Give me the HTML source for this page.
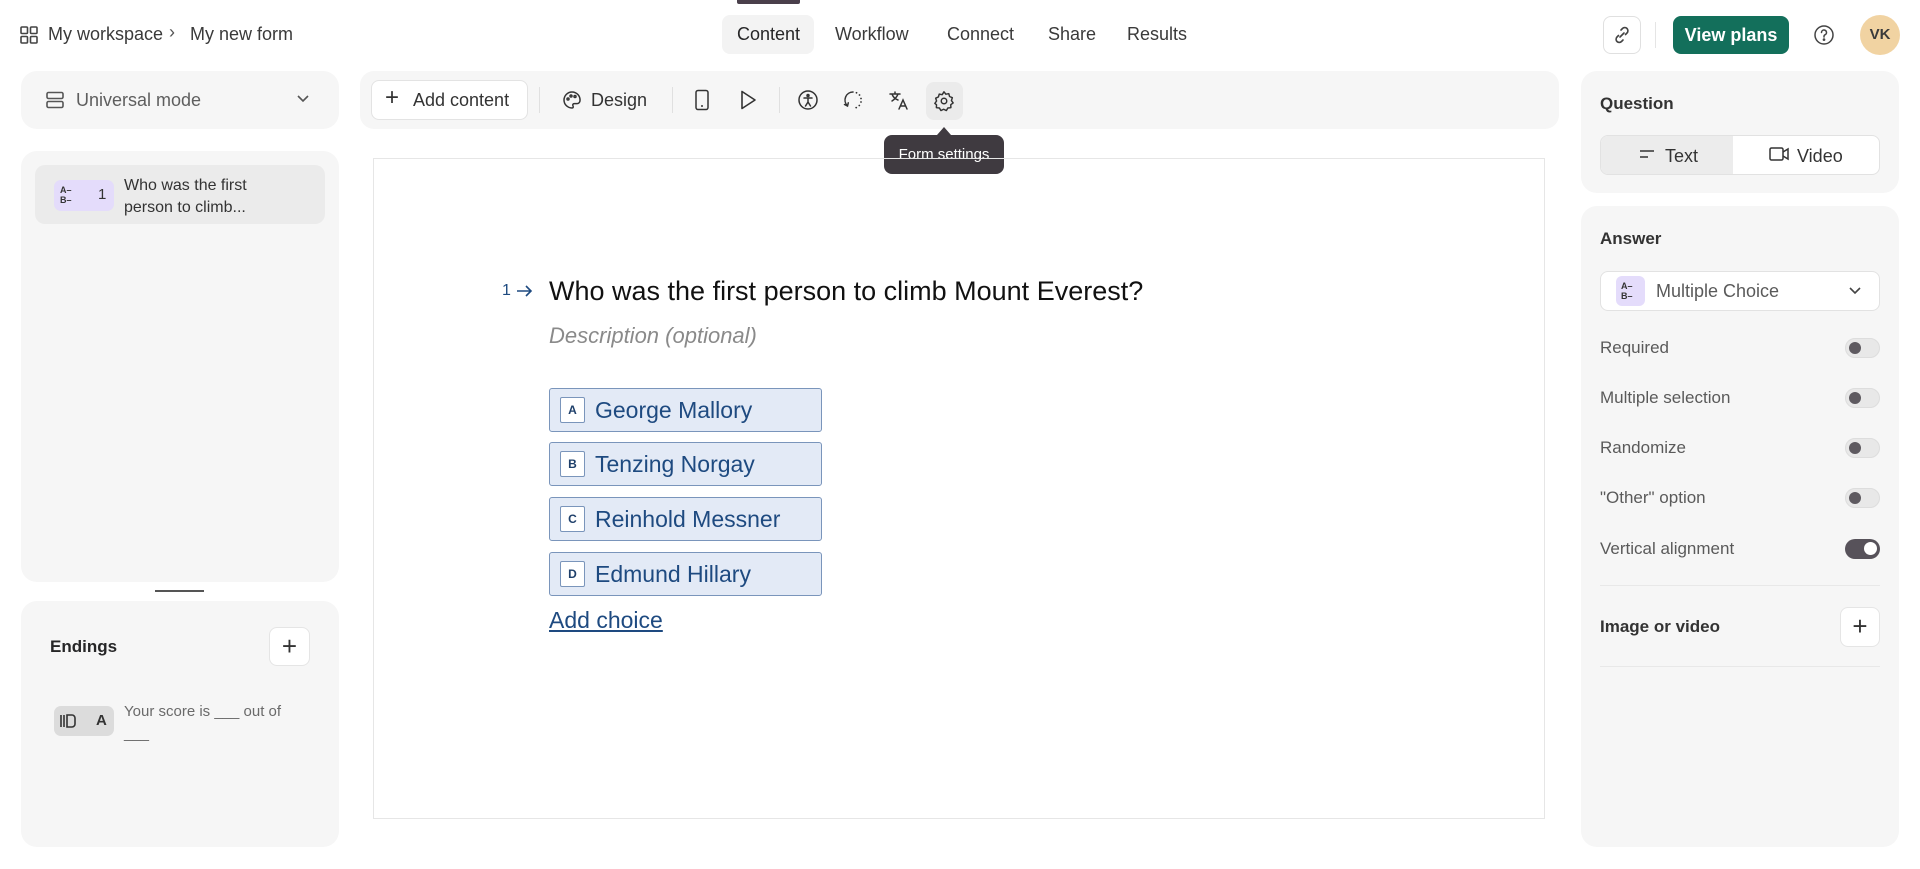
<!DOCTYPE html>
<html><head><meta charset="utf-8"><style>
*{box-sizing:border-box;margin:0;padding:0}
body{width:1920px;height:869px;background:#fff;font-family:"Liberation Sans",sans-serif;color:#262627;position:relative;overflow:hidden}
.a{position:absolute}
.panel{position:absolute;background:#f6f6f6;border-radius:16px}
.t{position:absolute;white-space:nowrap}
.tab{font-size:18px;color:#3a3a3a;top:24px}
.row{position:absolute;left:1600px;font-size:17px;color:#5a5a5a}
.tg{position:absolute;left:1845px;width:35px;height:20px;border-radius:10px;background:#e8e8e8;border:1px solid #ddd}
.tg:after{content:"";position:absolute;left:3px;top:3px;width:12px;height:12px;border-radius:50%;background:#5e5a60}
.ch{position:absolute;left:549px;width:273px;height:44px;background:#e3eaf6;border:1px solid #7a95bb;border-radius:3px}
.ch .k{position:absolute;left:10px;top:8px;width:25px;height:26px;background:#fff;border:1px solid #7a95bb;border-radius:2px;font-size:12px;font-weight:bold;color:#1e3f6a;text-align:center;line-height:24px}
.ch .v{position:absolute;left:45px;top:8px;font-size:23px;color:#1e4a80}
svg{position:absolute}
</style></head><body>
<!-- top bar -->
<svg style="left:20px;top:26px" width="18" height="18" viewBox="0 0 18 18" fill="none" stroke="#444" stroke-width="1.6"><rect x="1" y="1" width="6.5" height="6.5" rx="1"/><rect x="10.5" y="1" width="6.5" height="6.5" rx="1"/><rect x="1" y="10.5" width="6.5" height="6.5" rx="1"/><rect x="10.5" y="10.5" width="6.5" height="6.5" rx="1"/></svg>
<div class="t" style="left:48px;top:24px;font-size:18px;color:#3a3a3a">My workspace</div>
<div class="t" style="left:169px;top:22px;font-size:18px;color:#555">›</div>
<div class="t" style="left:190px;top:24px;font-size:18px;color:#3a3a3a">My new form</div>
<div class="a" style="left:737px;top:0;width:63px;height:4px;background:#4a3f4b;border-radius:0 0 2px 2px"></div>
<div class="a" style="left:722px;top:15px;width:92px;height:39px;background:#f3f3f3;border-radius:8px"></div>
<div class="t tab" style="left:737px;color:#262627">Content</div>
<div class="t tab" style="left:835px">Workflow</div>
<div class="t tab" style="left:947px">Connect</div>
<div class="t tab" style="left:1048px">Share</div>
<div class="t tab" style="left:1127px">Results</div>
<div class="a" style="left:1603px;top:16px;width:38px;height:38px;border:1px solid #e0e0e0;border-radius:8px"></div>
<svg style="left:1612px;top:25px" width="20" height="20" viewBox="0 0 20 20" fill="none" stroke="#444" stroke-width="1.6" stroke-linecap="round"><path d="M8 12l4-4M9 5l1.5-1.5a3 3 0 0 1 4.5 4.5L13.5 9.5M11 15l-1.5 1.5a3 3 0 0 1-4.5-4.5L6.5 10.5"/></svg>
<div class="a" style="left:1655px;top:22px;width:1px;height:26px;background:#e5e5e5"></div>
<div class="a" style="left:1673px;top:16px;width:116px;height:38px;background:#136f5b;border-radius:8px;color:#fff;font-size:18px;font-weight:bold;text-align:center;line-height:38px">View plans</div>
<svg style="left:1813px;top:24px" width="22" height="22" viewBox="0 0 22 22" fill="none" stroke="#444" stroke-width="1.5"><circle cx="11" cy="11" r="9"/><path d="M8.5 8.5a2.5 2.5 0 1 1 3.5 2.3c-.7.3-1 .8-1 1.5v.7" stroke-linecap="round"/><circle cx="11" cy="15.6" r=".6" fill="#444"/></svg>
<div class="a" style="left:1860px;top:15px;width:40px;height:40px;border-radius:50%;background:#f1d3a2;font-size:15px;font-weight:bold;color:#3a3a3a;text-align:center;line-height:40px">VK</div>

<!-- left -->
<div class="panel" style="left:21px;top:71px;width:318px;height:58px"></div>
<svg style="left:46px;top:91px" width="18" height="18" viewBox="0 0 18 18" fill="none" stroke="#555" stroke-width="1.6"><rect x="1" y="1.5" width="16" height="6" rx="1.5"/><rect x="1" y="10.5" width="16" height="6" rx="1.5"/></svg>
<div class="t" style="left:76px;top:90px;font-size:18px;color:#5e5e5e">Universal mode</div>
<svg style="left:296px;top:94px" width="14" height="10" viewBox="0 0 14 10" fill="none" stroke="#555" stroke-width="1.6"><path d="M2 2l5 5 5-5"/></svg>

<div class="panel" style="left:21px;top:151px;width:318px;height:431px"></div>
<div class="a" style="left:35px;top:165px;width:290px;height:59px;background:#ebebeb;border-radius:10px"></div>
<div class="a" style="left:54px;top:180px;width:60px;height:31px;background:#e4dcfb;border-radius:7px"></div>
<div class="t" style="left:60px;top:185px;font-size:9px;font-weight:bold;line-height:10px;color:#333">A–<br>B–</div>
<div class="t" style="left:98px;top:186px;font-size:15px;color:#333">1</div>
<div class="t" style="left:124px;top:175px;font-size:16px;line-height:22px;color:#333">Who was the first<br>person to climb...</div>
<div class="a" style="left:155px;top:590px;width:49px;height:2px;background:#555"></div>

<div class="panel" style="left:21px;top:601px;width:318px;height:246px"></div>
<div class="t" style="left:50px;top:637px;font-size:17px;font-weight:bold;color:#262627">Endings</div>
<div class="a" style="left:269px;top:627px;width:41px;height:39px;background:#fff;border:1px solid #e5e5e5;border-radius:8px;font-size:26px;line-height:36px;text-align:center;color:#333">+</div>
<div class="a" style="left:54px;top:706px;width:60px;height:30px;background:#dcdcdc;border-radius:7px"></div>
<svg style="left:59px;top:713px" width="20" height="16" viewBox="0 0 20 16" fill="none" stroke="#333" stroke-width="1.6"><path d="M2 2v12M5 2v12M8 2h5a3 3 0 0 1 3 3v6a3 3 0 0 1-3 3H8z"/></svg>
<div class="t" style="left:96px;top:712px;font-size:15px;font-weight:bold;color:#333">A</div>
<div class="t" style="left:124px;top:701px;font-size:15px;line-height:22px;color:#6a6a6a">Your score is ___ out of<br>___</div>

<!-- toolbar -->
<div class="panel" style="left:360px;top:71px;width:1199px;height:58px;border-radius:14px"></div>
<div class="a" style="left:371px;top:80px;width:157px;height:40px;background:#fff;border:1px solid #e3e3e3;border-radius:8px"></div>
<div class="t" style="left:385px;top:86px;font-size:24px;color:#333;line-height:24px">+</div>
<div class="t" style="left:413px;top:90px;font-size:18px;color:#333">Add content</div>
<div class="a" style="left:539px;top:87px;width:1px;height:26px;background:#e0e0e0"></div>
<svg style="left:562px;top:90px" width="20" height="20" viewBox="0 0 20 20" fill="none" stroke="#333" stroke-width="1.5"><path d="M10 2a8 8 0 0 0 0 16c1.2 0 1.6-1 1-2-.7-1.1 0-2.4 1.3-2.4H15a3 3 0 0 0 3-3A8 8 0 0 0 10 2z"/><circle cx="6" cy="9" r="1"/><circle cx="9" cy="6" r="1"/><circle cx="13" cy="6.5" r="1"/></svg>
<div class="t" style="left:591px;top:90px;font-size:18px;color:#333">Design</div>
<div class="a" style="left:672px;top:87px;width:1px;height:26px;background:#e0e0e0"></div>
<svg style="left:694px;top:89px" width="16" height="22" viewBox="0 0 16 22" fill="none" stroke="#333" stroke-width="1.5"><rect x="2" y="1.5" width="12" height="19" rx="2"/><path d="M7 17h2"/></svg>
<svg style="left:738px;top:89px" width="20" height="22" viewBox="0 0 20 22" fill="none" stroke="#333" stroke-width="1.6" stroke-linejoin="round"><path d="M4 2.5v17l13-8.5z"/></svg>
<div class="a" style="left:779px;top:87px;width:1px;height:26px;background:#e0e0e0"></div>
<svg style="left:797px;top:89px" width="22" height="22" viewBox="0 0 22 22" fill="none" stroke="#333" stroke-width="1.5" stroke-linecap="round"><circle cx="11" cy="11" r="9"/><circle cx="11" cy="6.5" r="1" fill="#333"/><path d="M7 9h8M11 9v4l-2.5 4M11 13l2.5 4"/></svg>
<svg style="left:842px;top:89px" width="22" height="22" viewBox="0 0 22 22" fill="none" stroke="#333" stroke-width="1.5" stroke-linecap="round"><path d="M11 3A8 8 0 0 0 5.3 16.6"/><path d="M2.5 15.5l3 1.5 .8-3.2"/><circle cx="14.5" cy="3.8" r=".9" fill="#333" stroke="none"/><circle cx="17.5" cy="6" r=".9" fill="#333" stroke="none"/><circle cx="19" cy="9.5" r=".9" fill="#333" stroke="none"/><circle cx="19" cy="13" r=".9" fill="#333" stroke="none"/><circle cx="17.3" cy="16.5" r=".9" fill="#333" stroke="none"/><circle cx="14.2" cy="18.6" r=".9" fill="#333" stroke="none"/></svg>
<svg style="left:888px;top:89px" width="22" height="22" viewBox="0 0 22 22" fill="none" stroke="#333" stroke-width="1.5" stroke-linecap="round"><path d="M2 5h10M7 3v2M4 5c1 3 3 5 6 6M10 5c-1 3-3 5-6 7M11 20l4-9 4 9M12.5 17h5"/></svg>
<div class="a" style="left:926px;top:82px;width:37px;height:38px;background:#ebebeb;border-radius:8px"></div>
<svg style="left:933px;top:90px" width="22" height="22" viewBox="0 0 24 24" fill="none" stroke="#333" stroke-width="1.6"><circle cx="12" cy="12" r="3"/><path d="M12 2l2 2.6 3.2-.6.9 3.1 3 1.3-1 3.1 1.9 2.6-2.6 1.9.1 3.3-3.3.3-1.6 2.8-3-1.4-3 1.4-1.6-2.8-3.3-.3.1-3.3L2 14.6l1.9-2.6-1-3.1 3-1.3.9-3.1 3.2.6z" stroke-linejoin="round"/></svg>
<div class="a" style="left:884px;top:135px;width:120px;height:39px;background:#3f3a40;border-radius:8px;color:#fff;font-size:15px;display:flex;align-items:center;justify-content:center">Form settings</div>
<div class="a" style="left:937px;top:127px;width:0;height:0;border-left:7px solid transparent;border-right:7px solid transparent;border-bottom:8px solid #3f3a40"></div>

<!-- canvas -->
<div class="a" style="left:373px;top:158px;width:1172px;height:661px;border:1px solid #e6e6e6"></div>
<div class="t" style="left:502px;top:282px;font-size:16px;color:#1e4a80">1</div>
<svg style="left:515px;top:282px" width="20" height="18" viewBox="0 0 20 18" fill="none" stroke="#1e4a80" stroke-width="1.6"><path d="M2 9h14M11 4l5 5-5 5"/></svg>
<div class="t" style="left:549px;top:276px;font-size:27px;color:#111">Who was the first person to climb Mount Everest?</div>
<div class="t" style="left:549px;top:323px;font-size:22px;font-style:italic;color:#8a8a8a">Description (optional)</div>
<div class="ch" style="top:388px"><div class="k">A</div><div class="v">George Mallory</div></div>
<div class="ch" style="top:442px"><div class="k">B</div><div class="v">Tenzing Norgay</div></div>
<div class="ch" style="top:497px"><div class="k">C</div><div class="v">Reinhold Messner</div></div>
<div class="ch" style="top:552px"><div class="k">D</div><div class="v">Edmund Hillary</div></div>
<div class="t" style="left:549px;top:607px;font-size:23px;color:#1e4a80;text-decoration:underline">Add choice</div>

<!-- right -->
<div class="panel" style="left:1581px;top:71px;width:318px;height:122px"></div>
<div class="t" style="left:1600px;top:94px;font-size:17px;font-weight:bold;color:#333">Question</div>
<div class="a" style="left:1600px;top:135px;width:280px;height:40px;background:#fff;border:1px solid #e2e2e2;border-radius:8px;overflow:hidden"><div class="a" style="left:0;top:0;width:132px;height:40px;background:#ececec"></div></div>
<svg style="left:1639px;top:149px" width="16" height="10" viewBox="0 0 16 10" stroke="#333" stroke-width="1.6"><path d="M1 2h14M1 8h8"/></svg>
<div class="t" style="left:1665px;top:146px;font-size:18px;color:#333">Text</div>
<svg style="left:1769px;top:146px" width="22" height="16" viewBox="0 0 22 16" fill="none" stroke="#333" stroke-width="1.5"><rect x="1" y="2" width="13" height="12" rx="1.5"/><path d="M14 6l5-3v10l-5-3"/></svg>
<div class="t" style="left:1797px;top:146px;font-size:18px;color:#333">Video</div>

<div class="panel" style="left:1581px;top:206px;width:318px;height:641px"></div>
<div class="t" style="left:1600px;top:229px;font-size:17px;font-weight:bold;color:#333">Answer</div>
<div class="a" style="left:1600px;top:271px;width:280px;height:40px;background:#fff;border:1px solid #e2e2e2;border-radius:8px"></div>
<div class="a" style="left:1616px;top:276px;width:29px;height:30px;background:#e4dcfb;border-radius:6px"></div>
<div class="t" style="left:1621px;top:281px;font-size:9px;font-weight:bold;line-height:10px;color:#333">A–<br>B–</div>
<div class="t" style="left:1656px;top:281px;font-size:18px;color:#5a5a5a">Multiple Choice</div>
<svg style="left:1848px;top:286px" width="14" height="10" viewBox="0 0 14 10" fill="none" stroke="#444" stroke-width="1.6"><path d="M2 2l5 5 5-5"/></svg>
<div class="row" style="top:338px">Required</div><div class="tg" style="top:338px"></div>
<div class="row" style="top:388px">Multiple selection</div><div class="tg" style="top:388px"></div>
<div class="row" style="top:438px">Randomize</div><div class="tg" style="top:438px"></div>
<div class="row" style="top:488px">"Other" option</div><div class="tg" style="top:488px"></div>
<div class="row" style="top:539px">Vertical alignment</div>
<div class="a" style="left:1845px;top:539px;width:35px;height:20px;border-radius:10px;background:#57525a"><div class="a" style="left:19px;top:3px;width:13px;height:13px;border-radius:50%;background:#fff"></div></div>
<div class="a" style="left:1600px;top:585px;width:280px;height:1px;background:#e8e8e8"></div>
<div class="t" style="left:1600px;top:617px;font-size:17px;font-weight:bold;color:#333">Image or video</div>
<div class="a" style="left:1840px;top:607px;width:40px;height:40px;background:#fff;border:1px solid #e5e5e5;border-radius:8px;font-size:26px;line-height:37px;text-align:center;color:#333">+</div>
<div class="a" style="left:1600px;top:666px;width:280px;height:1px;background:#e8e8e8"></div>
</body></html>
